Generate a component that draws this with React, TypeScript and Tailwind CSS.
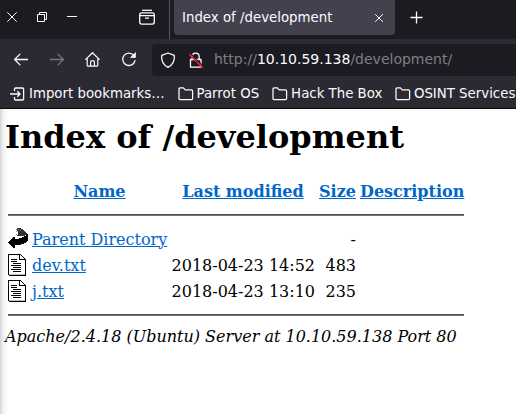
import React from "react";

const ui = "font-['DejaVu_Sans',sans-serif]";

function Folder() {
  return (
    <svg width="16" height="14" viewBox="0 0 16 14" fill="none" stroke="#fbfbfe" strokeWidth="1.25" className="shrink-0">
      <path d="M1 11.6V2Q1 .9 2.1.9H5.4L7.2 2.9H13.4Q14.6 2.9 14.6 4.1V11.4Q14.6 12.6 13.4 12.6H2.1Q1 12.6 1 11.6Z" />
    </svg>
  );
}

function TextFile() {
  return (
    <svg width="20" height="22" viewBox="0 0 20 22" shapeRendering="crispEdges" className="block">
      <path d="M0 0H13V1H14V2H15V3H16V4H17V5H18V22H1V21H0Z" fill="#000" />
      <path d="M1 1H11V6H17V20H1Z" fill="#fff" />
      <path d="M12 1H13V2H14V3H15V4H16V5H12Z" fill="#fff" />
      <path d="M1 20H17V21H1Z" fill="#bbb" />
      <path d="M3 5H9V6H3ZM3 7H9V8H3ZM5 9H13V10H5ZM3 11H13V12H3ZM5 13H13V14H5ZM3 15H13V16H3ZM5 17H13V18H5Z" fill="#000" />
    </svg>
  );
}

function BackArrow() {
  return (
    <svg width="20" height="22" viewBox="0 0 20 22" shapeRendering="crispEdges" className="block">
      <path d="M9 0H13V1H15V2H16V3H17V4H18V5H19V7H17V8H9V7H10V3H9Z" fill="#333" />
      <path d="M8 1H9V2H8ZM8 3H9V4H8ZM8 6H9V7H8ZM10 1H11V2H10ZM12 2H13V3H12Z" fill="#888" />
      <path d="M19 6H20V13H19V14H18V15H16V16H13V17H7V20H5V19H4V18H3V17H2V16H1V15H0V14H1V13H2V12H3V11H4V10H5V9H7V11H11V10H14V9H16V8H18V7H19Z" fill="#000" />
    </svg>
  );
}

function TabBar() {
  return (
    <div className="flex h-[39px] items-start bg-[#1c1b22] text-[#fbfbfe]">
      <svg width="169" height="39" viewBox="0 0 169 39" fill="none" stroke="#fbfbfe" strokeWidth="1" className="shrink-0">
        <path d="M7.3 12.3L16.7 21.7M16.7 12.3L7.3 21.7" />
        <path d="M37.5 14.5H44.5V21.5H37.5ZM39.5 14.5V12.5H46.5V19.5H44.5M67 16.5H77" />
        <path d="M142 10.3H152" strokeWidth="1.3" />
        <rect x="139.7" y="12.9" width="14.6" height="11.2" rx="2" strokeWidth="1.3" />
        <path d="M139.5 15.6H154.5M145 18.2H149" strokeWidth="1.2" />
      </svg>
      <div className="h-[39px] w-px bg-[#57565d]" />
      <div className="ml-1 flex h-[35px] w-[221px] items-center justify-between rounded-b-[4px] bg-[#42414d] pl-2 pr-[11px]">
        <span className={`${ui} whitespace-nowrap text-[13.33px]`}>Index of /development</span>
        <svg width="10" height="10" viewBox="0 0 10 10" stroke="#fbfbfe" strokeWidth="1"><path d="M1.2 1.2L8.8 8.8M8.8 1.2L1.2 8.8" /></svg>
      </div>
      <svg width="14" height="14" viewBox="0 0 14 14" stroke="#fbfbfe" strokeWidth="1.3" className="ml-[15px] mt-[11px]"><path d="M6.5 .5V12.5M.5 6.5H12.5" /></svg>
    </div>
  );
}

function NavBar() {
  return (
    <div className="flex h-[40px] items-center pt-px">
      <svg width="152" height="38" viewBox="0 41 152 38" fill="none" stroke="#fbfbfe" strokeWidth="1.3" strokeLinecap="round" strokeLinejoin="round" className="shrink-0">
        <path d="M27.5 59.5H14.6M20 54.1L14.6 59.5L20 64.9" />
        <path d="M50.5 59.5H63.2M58 54.1L63.4 59.5L58 64.9" stroke="#77767e" />
        <path d="M85.7 59.4L92.5 52.7L99.3 59.4M87.2 58.5V65.2Q87.2 66.2 88.2 66.2H96.8Q97.8 66.2 97.8 65.2V58.5M90.6 66V62Q90.6 60.7 92.5 60.7Q94.4 60.7 94.4 62V66" strokeWidth="1.2" />
        <path d="M133.8 55.4A6.2 6.2 0 1 0 135 60.6" />
        <path d="M135.4 53V57.4H131Z" fill="#fbfbfe" strokeWidth=".8" />
      </svg>
      <div className="flex h-[32px] flex-1 items-center rounded-l-[4px] bg-[#1c1b22]">
        <svg width="62" height="32" viewBox="152 43 62 32" fill="none" stroke="#fbfbfe" strokeWidth="1.3" strokeLinejoin="round" className="shrink-0">
          <path d="M168 52L174.3 54.4Q175.2 62.5 168 66.4Q160.8 62.5 161.7 54.4Z" />
          <path d="M192.2 58V56Q192.2 52.2 195.7 52.2Q199.2 52.2 199.2 56V58M190.5 58.5H201V66.2H190.5Z" />
          <path d="M190.4 52.4L203.2 65.4" stroke="#1c1b22" strokeWidth="1.2" />
          <path d="M189.3 53.2L202.6 66.6" stroke="#ff0f40" strokeWidth="1.6" />
        </svg>
        <span className={`${ui} whitespace-nowrap text-[14px] text-[#7f7e86]`}>http://<span className="text-[#fbfbfe]">10.10.59.138</span>/development/</span>
      </div>
    </div>
  );
}

function Bookmarks() {
  return (
    <div className={`${ui} flex h-[29px] items-center overflow-hidden whitespace-nowrap pl-[10px] text-[13.33px] text-[#fbfbfe]`}>
      <svg width="16" height="14" viewBox="0 0 16 14" fill="none" stroke="#fbfbfe" strokeWidth="1.3" className="mr-[3px] shrink-0">
        <path d="M4.5 4V2Q4.5 1 5.5 1H12.5Q13.6 1 13.6 2V12Q13.6 13 12.5 13H5.5Q4.5 13 4.5 12V10M0 7H10M7.3 4.2L10 7L7.3 9.8" />
      </svg>
      <span className="w-[148.5px] shrink-0">Import bookmarks…</span>
      <Folder /><span className="ml-[3px] mr-[13px]">Parrot OS</span>
      <Folder /><span className="ml-[3px] mr-[12.5px]">Hack The Box</span>
      <Folder /><span className="ml-[3px]">OSINT Services</span>
    </div>
  );
}

function Rule() {
  return <tr><td colSpan={5} className="p-px"><div className="my-2 h-[2px] border-t border-[#4d4d4d] bg-[#777]" /></td></tr>;
}

const link = "text-[#0066cc] underline";

export default function App() {
  return (
    <div className="h-[414px] overflow-hidden bg-white">
      <TabBar />
      <div className="h-[70px] border-b border-[#0c0c0d] bg-[#2b2a33]">
        <NavBar />
        <Bookmarks />
      </div>
      <div className="h-[305px] bg-[linear-gradient(to_right,#d4d4d4,#f1f1f1_3px,#fff_8px)] bg-white pl-[5px] pt-[10px] font-['DejaVu_Serif',serif] text-[16px] leading-[19px] text-black">
        <h1 className="h-[37px] whitespace-nowrap text-[32px] font-bold leading-[37px]">Index of /development</h1>
        <table className="mt-[21px] w-[462px] table-fixed border-separate border-spacing-[2px] whitespace-nowrap">
          <colgroup>
            <col className="w-[22px]" /><col className="w-[137px]" /><col className="w-[146px]" /><col className="w-[39px]" /><col className="w-[106px]" />
          </colgroup>
          <tbody>
            <tr className="h-[24px]">
              <th className="p-px" />
              <th className="p-px"><span className={link}>Name</span></th>
              <th className="p-px"><span className={link}>Last modified</span></th>
              <th className="p-px"><span className={link}>Size</span></th>
              <th className="p-px text-left"><span className={link}>Description</span></th>
            </tr>
            <Rule />
            <tr>
              <td className="p-px"><BackArrow /></td>
              <td className="p-px"><span className={link}>Parent Directory</span></td>
              <td />
              <td className="p-px text-right">-</td>
              <td />
            </tr>
            <tr>
              <td className="p-px"><TextFile /></td>
              <td className="p-px"><span className={link}>dev.txt</span></td>
              <td className="p-px text-right">2018-04-23 14:52</td>
              <td className="p-px text-right">483</td>
              <td />
            </tr>
            <tr>
              <td className="p-px"><TextFile /></td>
              <td className="p-px"><span className={link}>j.txt</span></td>
              <td className="p-px text-right">2018-04-23 13:10</td>
              <td className="p-px text-right">235</td>
              <td />
            </tr>
            <Rule />
          </tbody>
        </table>
        <address className="whitespace-nowrap italic">Apache/2.4.18 (Ubuntu) Server at 10.10.59.138 Port 80</address>
      </div>
    </div>
  );
}
